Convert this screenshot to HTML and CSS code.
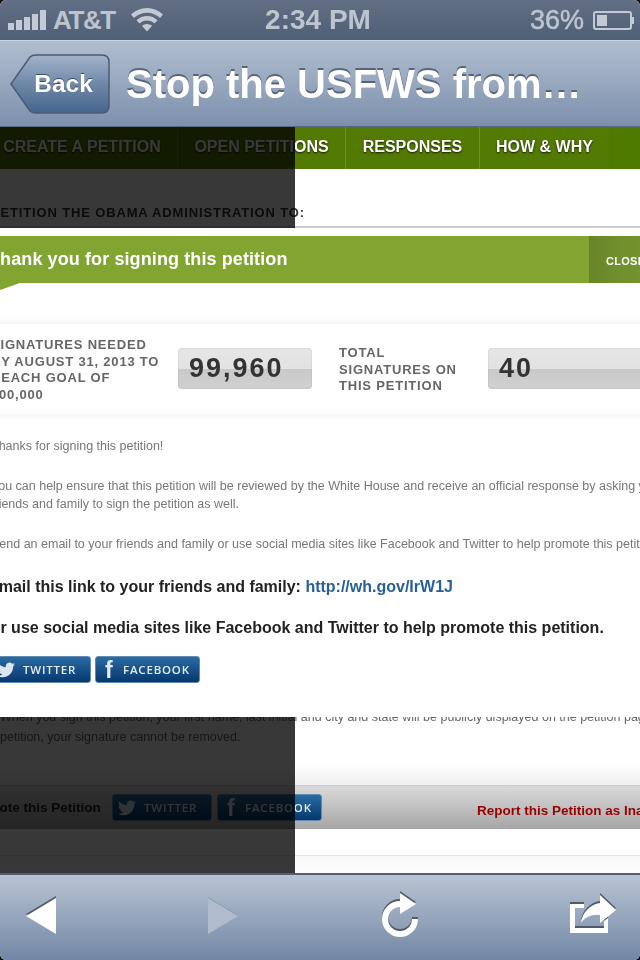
FILE: index.html
```html
<!DOCTYPE html>
<html lang="en">
<head>
  <meta charset="UTF-8" />
  <meta name="viewport" content="width=device-width, initial-scale=1.0"/>
  <title>Stop the USFWS from...</title>
  <link rel="stylesheet" href="styles.css">
</head>
<body>
<div class="phone">

  <div class="status">
    <div class="status-left">
      <div class="bars"><i class="b1"></i><i class="b2"></i><i class="b3"></i><i class="b4"></i><i class="b5"></i></div>
      <span class="carrier">AT&amp;T</span>
      <svg class="wifi" width="32" height="24" viewBox="0 0 32 24">
        <path d="M16 0C10 0 4.500 2.300 0 6.500L3 10C6.500 6.700 11 4.700 16 4.700S25.500 6.700 29 10L32 6.500C27.500 2.300 22 0 16 0Z"/>
        <path d="M16 8C12 8 8.500 9.500 5.500 12.200L8.500 15.500C10.500 13.700 13 12.600 16 12.600S21.500 13.700 23.500 15.500L26.500 12.200C23.500 9.500 20 8 16 8Z"/>
        <path d="M16 16C14 16 12.300 16.700 11 17.800L16 23.500L21 17.800C19.700 16.700 18 16 16 16Z"/>
      </svg>
    </div>
    <div class="clock">2:34 PM</div>
    <div class="status-right">
      <span class="percent">36%</span>
      <div class="battery"><div class="battery-fill"></div></div>
      <div class="battery-tip"></div>
    </div>
  </div>

  <div class="navbar">
    <div class="back">
      <svg class="back-shape" width="100" height="60" viewBox="0 0 100 60">
        <defs>
          <linearGradient id="backGrad" x1="0" y1="0" x2="0" y2="1">
            <stop offset="0" stop-color="#a3b3c9"/>
            <stop offset="0.5" stop-color="#6f88a8"/>
            <stop offset="1" stop-color="#45648c"/>
          </linearGradient>
        </defs>
        <path d="M1 30L20 3Q22 1 26 1H92Q99 1 99 8V52Q99 59 92 59H26Q22 59 20 57Z" fill="url(#backGrad)" stroke="#4c5c74" stroke-width="1.500"/>
      </svg>
      <span class="back-label">Back</span>
    </div>
    <div class="nav-title">Stop the USFWS from…</div>
  </div>

  <div class="viewport">
    <div class="page">
      <div class="tabs">
        <div class="tab tab-create">CREATE A PETITION</div>
        <div class="tab tab-open">OPEN PETITIONS</div>
        <div class="tab tab-resp">RESPONSES</div>
        <div class="tab tab-how">HOW &amp; WHY</div>
      </div>
      <div class="petition-head">PETITION THE OBAMA ADMINISTRATION TO:</div>
      <div class="under">
        <p>When you sign this petition, your first name, last initial and city and state will be publicly displayed on the petition page. Once you sign a</p>
        <p class="under-second">petition, your signature cannot be removed.</p>
      </div>
      <div class="promote-fade"></div>
      <div class="promote">
        <span class="promote-label">Promote this Petition</span>
        <a class="share share-tw">
          <svg class="bird" viewBox="0 0 24 24"><path d="M23.950 4.570a10 10 0 0 1-2.820.770 4.960 4.960 0 0 0 2.160-2.720c-.950.550-2 .950-3.120 1.180a4.920 4.920 0 0 0-8.380 4.480C7.690 8.100 4.070 6.130 1.640 3.160a4.820 4.820 0 0 0-.670 2.480c0 1.710.870 3.210 2.190 4.100a4.900 4.900 0 0 1-2.230-.620v.060a4.920 4.920 0 0 0 3.950 4.830 5 5 0 0 1-2.210.080 4.940 4.940 0 0 0 4.600 3.420A9.870 9.870 0 0 1 0 19.540a13.940 13.940 0 0 0 7.550 2.210c9.050 0 14-7.500 14-13.980 0-.210 0-.420-.020-.630a9.940 9.940 0 0 0 2.460-2.550z"/></svg>
          TWITTER
        </a>
        <a class="share share-fb"><span class="fb-f">f</span>FACEBOOK</a>
        <span class="report">Report this Petition as Inappropriate</span>
      </div>
      <div class="page-end"></div>
    </div>

    <!-- dim layer the modal sits on -->
    <div class="dim"></div>

    <div class="modal">
      <div class="banner">
        <span class="banner-text">Thank you for signing this petition</span>
        <div class="close">CLOSE</div>
      </div>
      <div class="fold"></div>
      <div class="stats">
        <div class="stat-label stat-label-a">SIGNATURES NEEDED<br>BY AUGUST 31, 2013 TO<br>REACH GOAL OF<br>100,000</div>
        <div class="counter counter-a">99,960</div>
        <div class="stat-label stat-label-b">TOTAL<br>SIGNATURES ON<br>THIS PETITION</div>
        <div class="counter counter-b">40</div>
      </div>
      <div class="modal-body">
        <p class="copy first">Thanks for signing this petition!</p>
        <p class="copy">You can help ensure that this petition will be reviewed by the White House and receive an official response by asking your<br>friends and family to sign the petition as well.</p>
        <p class="copy">Send an email to your friends and family or use social media sites like Facebook and Twitter to help promote this petition.</p>
        <p class="strong strong-first">Email this link to your friends and family: <a class="link">http://wh.gov/IrW1J</a></p>
        <p class="strong">Or use social media sites like Facebook and Twitter to help promote this petition.</p>
        <div class="modal-share">
          <a class="share share-tw">
            <svg class="bird" viewBox="0 0 24 24"><path d="M23.950 4.570a10 10 0 0 1-2.820.770 4.960 4.960 0 0 0 2.160-2.720c-.950.550-2 .950-3.120 1.180a4.920 4.920 0 0 0-8.380 4.480C7.690 8.100 4.070 6.130 1.640 3.160a4.820 4.820 0 0 0-.670 2.480c0 1.710.870 3.210 2.190 4.100a4.900 4.900 0 0 1-2.230-.620v.060a4.920 4.920 0 0 0 3.950 4.830 5 5 0 0 1-2.210.080 4.940 4.940 0 0 0 4.600 3.420A9.870 9.870 0 0 1 0 19.540a13.940 13.940 0 0 0 7.550 2.210c9.050 0 14-7.500 14-13.980 0-.210 0-.420-.020-.630a9.940 9.940 0 0 0 2.460-2.550z"/></svg>
            TWITTER
          </a>
          <a class="share share-fb"><span class="fb-f">f</span>FACEBOOK</a>
        </div>
      </div>
    </div>
  </div>

  <div class="toolbar">
    <svg class="tool tool-arrow" width="30" height="36" viewBox="0 0 30 36"><path d="M30 0V36L0 18Z"/></svg>
    <svg class="tool tool-arrow tool-off" width="30" height="36" viewBox="0 0 30 36"><path d="M0 0V36L30 18Z"/></svg>
    <svg class="tool tool-reload" width="36" height="44" viewBox="0 0 36 44">
      <path d="M0 26A18 18 0 1 0 36 26H30A12 12 0 1 1 18 14V21L34 11L18 0V8A18 18 0 0 0 0 26Z"/>
    </svg>
    <svg class="tool tool-share" width="46" height="38" viewBox="0 0 46 38">
      <path d="M0 9H14V13H5V33H34V26L38 23V38H0Z"/>
      <path d="M30 0L46 15L30 28V20C22 19 15 22 11 28C12 18 20 9 30 8Z"/>
    </svg>
  </div>

</div>
</body>
</html>
```

FILE: styles.css
```css
* {
  box-sizing: border-box;
}

html, body {
  margin: 0;
  height: 100%;
  background: #000;
}

body {
  font-family: 'Liberation Sans', Arial, sans-serif;
}

.phone {
  width: 640px;
  height: 960px;
  display: flex;
  flex-direction: column;
  overflow: hidden;
  border-radius: 6px;
  background: #fff;
  filter: blur(0.35px);
}

/* status bar */
.status {
  height: 40px;
  flex: none;
  display: grid;
  grid-template-columns: 1fr auto 1fr;
  align-items: center;
  padding: 0 6px 0 8px;
  background: linear-gradient(to bottom, #626f84, #4f5f76);
  color: #bcc4ce;
  font-weight: bold;
  font-size: 27px;
}

.status-left {
  display: flex;
  align-items: center;
}

.bars {
  display: flex;
  align-items: flex-end;
  gap: 2px;
  height: 20px;
  margin-right: 7px;
}

.bars i {
  display: block;
  width: 6px;
  background: #c3cad3;
}

.b1 { height: 7px; }
.b2 { height: 10px; }
.b3 { height: 13px; }
.b4 { height: 16px; }
.b5 { height: 20px; }

.carrier {
  font-size: 26px;
  letter-spacing: -1.4px;
}

.wifi {
  margin-left: 16px;
  fill: #c3cad3;
}

.clock {
  margin-left: -6px;
  font-size: 28px;
}

.status-right {
  display: flex;
  align-items: center;
  justify-content: flex-end;
}

.percent {
  margin-right: 9px;
  font-weight: normal;
  -webkit-text-stroke: 0.5px #bcc4ce;
}

.battery {
  width: 39px;
  height: 19px;
  border: 2px solid #c3cad3;
  border-radius: 3px;
  padding: 2px;
}

.battery-fill {
  width: 10px;
  height: 100%;
  background: #c3cad3;
}

.battery-tip {
  width: 2px;
  height: 7px;
  background: #c3cad3;
}

/* nav bar */
.navbar {
  height: 87px;
  flex: none;
  display: flex;
  align-items: center;
  padding: 1px 0 0 10px;
  border-top: 1px solid #cdd5e0;
  border-bottom: 1px solid #59697f;
  background: linear-gradient(to bottom, #b1bed0, #7c90ac);
}

.back {
  position: relative;
  width: 100px;
  height: 60px;
  display: flex;
  align-items: center;
  justify-content: center;
}

.back-shape {
  position: absolute;
  top: 0;
  left: 0;
}

.back-label {
  position: relative;
  margin-left: 7px;
  color: #fff;
  font-size: 24.500px;
  font-weight: bold;
  text-shadow: 0 -1px 0 #3c4d66;
}

.nav-title {
  margin-left: 16px;
  color: #fff;
  font-size: 40px;
  font-weight: bold;
  white-space: nowrap;
  text-shadow: 0 -2px 0 #56657c;
}

/* the web page in the browser */
.viewport {
  position: relative;
  height: 746px;
  flex: none;
  overflow: hidden;
  background: #fff;
}

.page {
  margin-left: -9px;
  width: 720px;
}

.tabs {
  height: 42px;
  display: flex;
  background: linear-gradient(to right, #537a03 0, #537a03 618px, #4f7a00 618px);
}

.tab {
  height: 42px;
  line-height: 40px;
  color: #fff;
  font-size: 16px;
  font-weight: bold;
  text-align: center;
  white-space: nowrap;
  text-shadow: 0 1px 2px rgba(0, 0, 0, 0.8);
  border-right: 1px solid #6f9227;
}

.tab-create { width: 187px; padding-right: 4px; }
.tab-open { width: 168px; }
.tab-resp { width: 134px; }
.tab-how { width: 129px; border-right: none; }

.petition-head {
  height: 59px;
  padding-top: 36px;
  border-bottom: 2px solid #ccc;
  color: #333;
  font-size: 13px;
  font-weight: bold;
  letter-spacing: 0.85px;
  white-space: nowrap;
}

.under {
  padding: 479px 0 0 9px;
  color: #666;
  font-size: 12.500px;
  line-height: 20px;
  white-space: nowrap;
}

.under p {
  margin: 0;
}

.promote-fade {
  height: 23px;
  margin-top: 15px;
  background: linear-gradient(to bottom, #fff, #f0f0f0);
}

.promote {
  height: 44px;
  display: flex;
  align-items: center;
  border-top: 1px solid #c9c9c9;
  background: linear-gradient(to bottom, #dadada, #a6a6a6);
  white-space: nowrap;
}

.promote-label {
  width: 121px;
  margin-left: -26px;
  margin-right: 26px;
  color: #222;
  font-size: 13.500px;
  font-weight: bold;
}

.promote .share-fb {
  margin-left: 5px;
}

.report {
  margin: 6px 0 0 155px;
  color: #900;
  font-size: 13.500px;
  font-weight: bold;
}

.page-end {
  height: 44px;
  margin-top: 26px;
  border-top: 1px solid #e6ebd2;
  background: linear-gradient(to bottom, #f7f7f7, #fff 40%);
}

.dim {
  position: absolute;
  top: 0;
  left: 0;
  width: 295px;
  height: 100%;
  background: rgba(0, 0, 0, 0.78);
}

/* share buttons */
.share {
  height: 27px;
  display: inline-flex;
  align-items: center;
  flex: none;
  border: 1px solid #5f8bb3;
  border-radius: 3px;
  background: linear-gradient(to bottom, #2a6ba3, #05386e);
  color: #e3ebf3;
  font-family: 'Open Sans', sans-serif;
  font-size: 11.500px;
  font-weight: 600;
  letter-spacing: 0.8px;
}

.share-tw {
  width: 100px;
  padding-left: 4px;
  gap: 7px;
}

.share-fb {
  width: 105px;
  padding-left: 9px;
}

.bird {
  width: 20px;
  height: 18px;
  fill: #dbe6f0;
}

.fb-f {
  width: 18px;
  font-family: 'Liberation Sans', sans-serif;
  font-size: 23px;
  font-weight: bold;
  line-height: 20px;
}

/* thank-you modal */
.modal {
  position: absolute;
  top: 101px;
  left: -9px;
  width: 720px;
  height: 489px;
  padding-top: 8px;
  background: #fff;
}

.banner {
  height: 47px;
  display: flex;
  align-items: center;
  justify-content: space-between;
  background: #82a532;
}

.banner-text {
  margin-left: -2px;
  color: #fff;
  font-size: 18px;
  font-weight: bold;
  letter-spacing: 0.1px;
}

.close {
  width: 122px;
  height: 100%;
  margin-left: auto;
  padding: 19px 0 0 17px;
  color: #fff;
  font-size: 11px;
  font-weight: bold;
  letter-spacing: 0.3px;
  background: linear-gradient(to right, #668528, #6e8f2c 20%, #7d9f34);
}

.fold {
  width: 0;
  height: 0;
  border-top: 10px solid #82a532;
  border-right: 29px solid transparent;
}

.stats {
  height: 90px;
  margin-top: 31px;
  display: flex;
  align-items: center;
  box-shadow: 0 0 10px rgba(0, 0, 0, 0.08);
  background: #fff;
  white-space: nowrap;
}

.stat-label {
  padding-top: 2px;
  color: #666;
  font-size: 13px;
  font-weight: bold;
  line-height: 16.500px;
  letter-spacing: 0.8px;
}

.stat-label-a {
  width: 187px;
}

.stat-label-b {
  width: 149px;
  margin-left: 27px;
}

.counter {
  height: 41px;
  margin-top: -1px;
  padding-left: 11px;
  border-radius: 4px;
  color: #333;
  font-size: 27px;
  font-weight: bold;
  line-height: 41px;
  letter-spacing: 2px;
  background: linear-gradient(to bottom, #e6e6e6 0, #e2e2e2 50%, #c9c9c9 50%, #d1d1d1 100%);
  box-shadow: inset 0 0 2px rgba(0, 0, 0, 0.15);
}

.counter-a {
  width: 134px;
}

.counter-b {
  width: 170px;
}

.modal-body {
  padding-top: 23px;
  white-space: nowrap;
}

.copy {
  margin: 22px 0 0 0;
  color: #777;
  font-size: 12.500px;
  line-height: 18px;
}

.copy.first {
  margin-top: 0;
}

.strong {
  margin: 21px 0 0 -3px;
  color: #222;
  font-size: 16px;
  font-weight: bold;
  line-height: 20px;
}

.strong-first {
  margin-top: 24px;
}

.link {
  color: #2a6098;
}

.modal-share {
  display: flex;
  gap: 4px;
  margin-top: 18px;
}

/* bottom toolbar */
.toolbar {
  flex: 1;
  display: flex;
  align-items: center;
  padding: 0 0 0 26px;
  border-top: 2px solid #4f5f76;
  background: linear-gradient(to bottom, #b8c4d3, #7287a5);
}

.tool {
  fill: #fff;
  filter: drop-shadow(0 -1.500px 0 #4f5a6c);
}

.tool-arrow {
  margin-bottom: 4px;
}

.tool-off {
  margin-left: 152px;
  fill: #b0bccd;
  filter: drop-shadow(0 -1px 0 #8b9ab0);
}

.tool-reload {
  margin: 0 0 6px 144px;
}

.tool-share {
  margin: 0 0 8px 152px;
}
```
